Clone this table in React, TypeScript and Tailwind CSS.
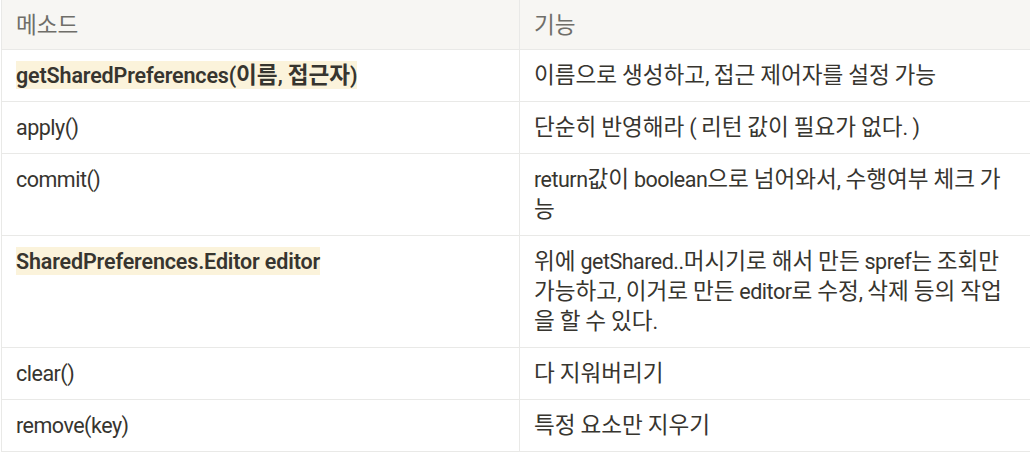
const rows: { method: string; desc: string; mark?: boolean }[] = [
  { method: 'getSharedPreferences(이름, 접근자)', desc: '이름으로 생성하고, 접근 제어자를 설정 가능', mark: true },
  { method: 'apply()', desc: '단순히 반영해라 ( 리턴 값이 필요가 없다. )' },
  { method: 'commit()', desc: 'return값이 boolean으로 넘어와서, 수행여부 체크 가능' },
  {
    method: 'SharedPreferences.Editor editor',
    desc: '위에 getShared..머시기로 해서 만든 spref는 조회만 가능하고, 이거로 만든 editor로 수정, 삭제 등의 작업을 할 수 있다.',
    mark: true,
  },
  { method: 'clear()', desc: '다 지워버리기' },
  { method: 'remove(key)', desc: '특정 요소만 지우기' },
];

// Hangul runs get the CJK face at a larger size, latin stays on Roboto
function Mixed({ text }: { text: string }) {
  const parts = text.split(/([\uAC00-\uD7A3]+)/);
  return (
    <>
      {parts.map((p, i) =>
        /[\uAC00-\uD7A3]/.test(p) ? (
          <span key={i} className="font-['Noto_Sans_CJK_KR',sans-serif] text-[22.6px] leading-none tracking-normal">
            {p}
          </span>
        ) : (
          p
        )
      )}
    </>
  );
}

export default function App() {
  return (
    <div className="w-[1030px] h-[456px] overflow-hidden bg-white font-['Roboto','Noto_Sans_CJK_KR',sans-serif] text-[21.5px] tracking-[-0.5px] leading-[30px] text-[#37352f]">
      <div className="ml-px w-[1060px] border-l border-[#e9e9e7]">
        {/* header */}
        <div className="flex h-[50px] bg-[#f7f6f3] border-b border-[#e9e9e7] text-[#6f6e69]">
          <div className="w-[518px] shrink-0 border-r border-[#e9e9e7] px-[14px] flex items-center">
            <Mixed text="메소드" />
          </div>
          <div className="flex-1 px-[14px] flex items-center">
            <Mixed text="기능" />
          </div>
        </div>

        {rows.map((r) => (
          <div key={r.method} className="flex border-b border-[#e9e9e7]">
            <div className="w-[518px] shrink-0 border-r border-[#e9e9e7] px-[14px] py-[10.5px]">
              {r.mark ? (
                <span className="bg-[#fbf3db] font-semibold tracking-[-0.15px] py-[1.5px]">
                  <Mixed text={r.method} />
                </span>
              ) : (
                <Mixed text={r.method} />
              )}
            </div>
            <div className="w-[510px] shrink-0 px-[14px] py-[10.5px]">
              <Mixed text={r.desc} />
            </div>
          </div>
        ))}
      </div>
    </div>
  );
}
